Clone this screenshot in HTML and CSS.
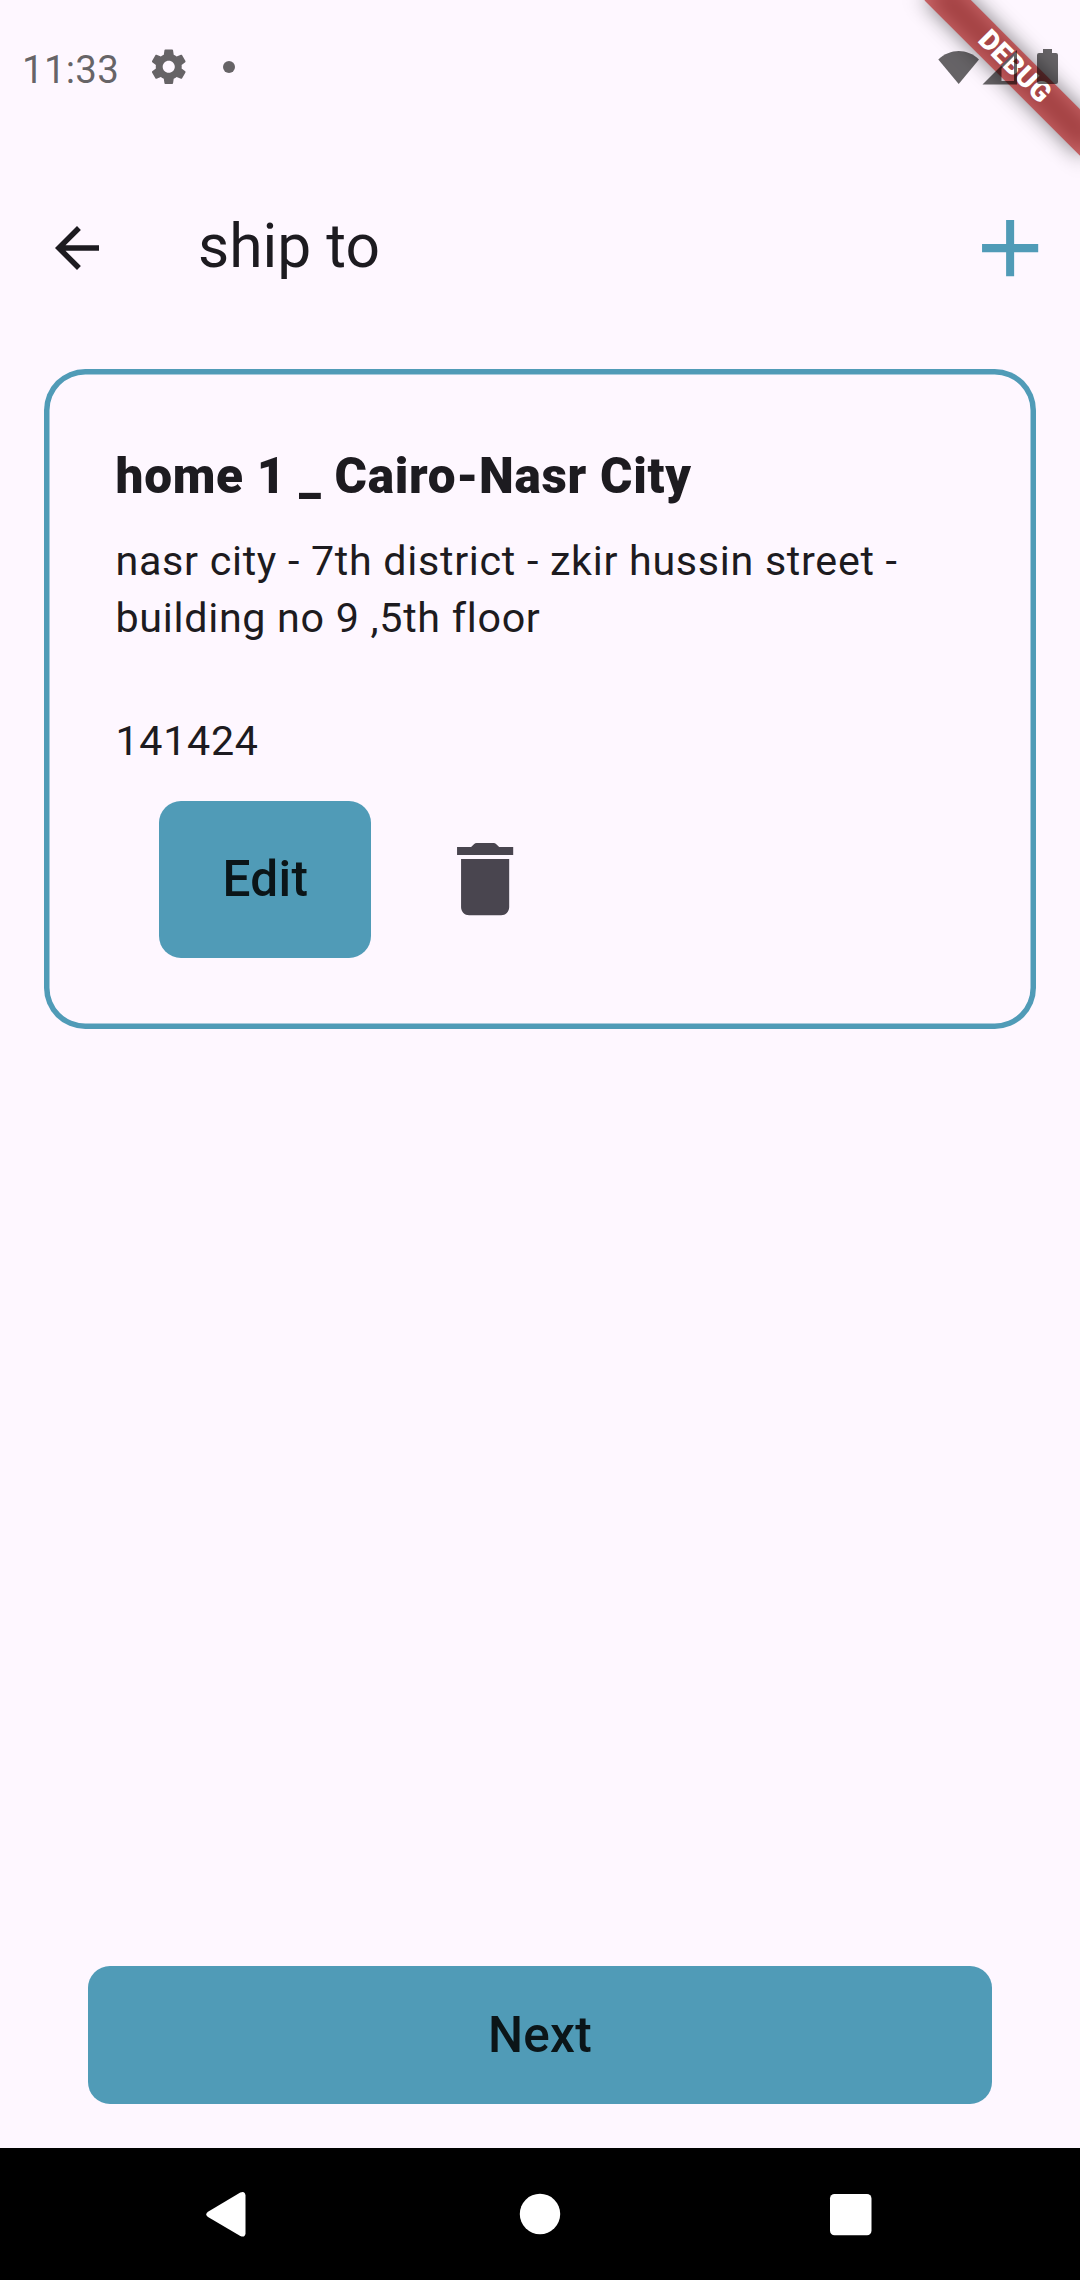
FILE: index.html
```html
<!DOCTYPE html>
<html lang="en">
<head>
<meta charset="utf-8">
<title>ship to</title>
<link rel="stylesheet" href="styles.css">
</head>
<body>
<div class="screen">
  <div class="debug-banner"><span class="debug-label">DEBUG</span></div>
  <div class="status-bar">
    <span class="clock">11:33</span>
    <svg class="gear" viewBox="0 0 24 24"><path d="M19.43 12.98c.04-.32.07-.64.07-.98s-.03-.66-.07-.98l2.11-1.65c.19-.15.24-.42.12-.64l-2-3.46c-.12-.22-.39-.3-.61-.22l-2.49 1c-.52-.4-1.08-.73-1.69-.98l-.38-2.65C14.46 2.18 14.25 2 14 2h-4c-.25 0-.46.18-.49.42l-.38 2.65c-.61.25-1.17.59-1.69.98l-2.49-1c-.23-.09-.49 0-.61.22l-2 3.46c-.13.22-.07.49.12.64l2.11 1.65c-.04.32-.07.65-.07.98s.03.66.07.98l-2.11 1.65c-.19.15-.24.42-.12.64l2 3.46c.12.22.39.3.61.22l2.49-1c.52.4 1.08.73 1.69.98l.38 2.65c.03.24.24.42.49.42h4c.25 0 .46-.18.49-.42l.38-2.65c.61-.25 1.17-.59 1.69-.98l2.49 1c.23.09.49 0 .61-.22l2-3.46c.12-.22.07-.49-.12-.64l-2.11-1.65zM12 15.5c-1.93 0-3.5-1.57-3.5-3.5s1.57-3.5 3.5-3.5 3.5 1.57 3.5 3.5-1.57 3.5-3.5 3.5z"/></svg>
    <span class="dot"></span>
    <svg class="radios" viewBox="0 0 122 38">
      <path d="M.3 11.5C12 0 29.500 0 41 11.500L20.700 36z"/>
      <path fill-rule="evenodd" d="M44.500 36.500 79 2v34.500zM63.500 20.500v12.500H76V8z"/>
      <path d="M105 1h9v4h4a2 2 0 0 1 2 2v27a2 2 0 0 1-2 2h-17a2 2 0 0 1-2-2V7a2 2 0 0 1 2-2h4z"/>
    </svg>
  </div>
  <header class="app-bar">
    <svg class="back" viewBox="0 0 24 24"><path d="M20 11H7.830l5.590-5.590L12 4l-8 8 8 8 1.410-1.410L7.830 13H20z"/></svg>
    <h1 class="title">ship to</h1>
    <svg class="add" viewBox="0 0 24 24"><path d="M19 13h-6v6h-2v-6H5v-2h6V5h2v6h6z"/></svg>
  </header>
  <main class="content">
    <section class="card">
      <h2 class="name">home 1 _ Cairo-Nasr City</h2>
      <p class="address">nasr city - 7th district - zkir hussin street -<br>building no 9 ,5th floor</p>
      <p class="phone">141424</p>
      <div class="actions">
        <button class="button edit">Edit</button>
        <svg class="trash" viewBox="0 0 24 24"><path d="M6 19c0 1.100.9 2 2 2h8c1.100 0 2-.9 2-2V7H6zM19 4h-3.500l-.71-.71c-.18-.18-.44-.29-.7-.29H9.910c-.26 0-.52.11-.7.29L8.500 4H5v2h14z"/></svg>
      </div>
    </section>
  </main>
  <button class="button next">Next</button>
  <nav class="nav-bar">
    <svg viewBox="0 0 46 46"><path d="M2 20.800 34.300 1.500Q39-.5 39.500 4.500v38q-.5 4.500-5.200 2.500L2 26Q-1.500 23.500 2 20.800z"/></svg>
    <svg viewBox="0 0 46 46"><circle cx="23" cy="23" r="20.200"/></svg>
    <svg viewBox="0 0 46 46"><rect x="2" y="3" width="41.500" height="41.300" rx="4.500"/></svg>
  </nav>
</div>
</body>
</html>
```
FILE: styles.css
```css
* { box-sizing: border-box; margin: 0; padding: 0; }

body { background: #fef7ff; font-family: Roboto, "Noto Sans", sans-serif; color: #1d1b20; }

svg { display: block; flex: none; fill: currentColor; }

.screen {
  position: relative;
  display: flex;
  flex-direction: column;
  width: 1080px;
  height: 2280px;
  overflow: hidden;
}

.status-bar {
  position: relative;
  display: flex;
  align-items: center;
  height: 134px;
  padding: 0 20px 0 22px;
  color: rgba(0, 0, 0, .6);
}
.clock { width: 126px; font-size: 38.500px; line-height: 46px; padding-top: 5px; letter-spacing: .25px; }
.gear { width: 41.500px; height: 41.500px; }
.dot { width: 12px; height: 12px; margin-left: 33.500px; border-radius: 50%; background: currentColor; }
.radios { width: 122px; height: 38px; margin-left: auto; }

/* Corner ribbon, lying under the status icons */
.debug-banner {
  position: absolute;
  left: 904px;
  top: 49.500px;
  width: 220px;
  height: 33px;
  transform: rotate(45deg);
  text-align: center;
}
.debug-banner::before,
.debug-banner::after { content: ""; position: absolute; inset: 0; }
.debug-banner::before { background: rgba(0, 0, 0, .5); filter: blur(10.900px); }
.debug-banner::after { background: rgba(183, 28, 28, .627); }
.debug-label {
  position: relative;
  z-index: 1;
  display: block;
  padding-left: 1px;
  color: #fff;
  font-size: 28px;
  font-weight: 900;
  line-height: 31px;
}

.app-bar { display: flex; align-items: center; height: 154px; margin-top: 37px; padding: 0 22px 0 44px; }
.back { width: 66px; height: 66px; }
.title { margin-left: 88px; padding-bottom: 3px; font-size: 60.500px; font-weight: 400; line-height: 76px; }
.add { width: 96.250px; height: 96.250px; margin-left: auto; color: #509bb7; }

.content { flex: 1; padding: 44px 44px 0; }
.card {
  height: 660px;
  padding: 77px 71.500px 0;
  border-radius: 41.250px;
  box-shadow: inset 0 0 0 5.500px #509bb7;
}
.name { font-size: 49.500px; font-weight: 900; line-height: 60px; letter-spacing: .6875px; }
.address { margin-top: 27px; font-size: 41.250px; line-height: 57px; letter-spacing: .6875px; white-space: nowrap; }
.phone { margin-top: 66px; font-size: 41.250px; line-height: 57px; letter-spacing: .6875px; }
.actions { display: flex; align-items: center; margin-top: 30.500px; padding-left: 43.800px; }
.trash { width: 96.250px; height: 96.250px; margin-left: 65.500px; color: #49454f; }

.button {
  border: 0;
  border-radius: 22px;
  background: #509bb7;
  color: #0b1518;
  font-family: inherit;
  font-size: 49.500px;
  font-weight: 500;
  letter-spacing: .275px;
}
.edit { width: 212.200px; height: 157px; }
.next { flex: none; height: 137.500px; margin: 0 88px 44.200px; }

.nav-bar { display: flex; align-items: center; justify-content: center; gap: 265px; height: 132px; background: #000; color: #fff; }
.nav-bar svg { width: 46px; height: 46px; }
```
